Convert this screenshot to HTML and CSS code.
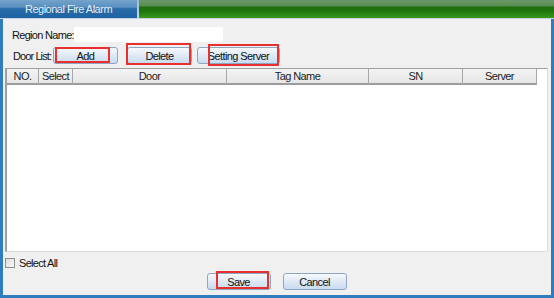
FILE: index.html
```html
<!DOCTYPE html>
<html lang="en">
<head>
  <meta charset="UTF-8" />
  <title>Regional Fire Alarm</title>
  <link rel="stylesheet" href="styles.css">
</head>
<body>
  <div class="window">
    <div class="titlebar">
      <div class="tab">Regional Fire Alarm</div>
      <div class="tab-gap"></div>
      <div class="tab-rest"></div>
    </div>

    <div class="panel">
      <div class="row region-row">
        <label class="field-label region-label">Region Name:</label>
        <input class="region-input" type="text" />
      </div>

      <div class="row door-row">
        <span class="field-label door-label">Door List:</span>
        <span class="btn-wrap btn-add">
          <button class="btn">Add</button>
          <span class="mark mark-add"></span>
        </span>
        <span class="btn-wrap btn-delete">
          <button class="btn">Delete</button>
          <span class="mark mark-delete"></span>
        </span>
        <span class="btn-wrap btn-server">
          <button class="btn">Setting Server</button>
          <span class="mark mark-server"></span>
        </span>
      </div>

      <div class="table">
        <div class="thead">
          <div class="th">NO.</div>
          <div class="th">Select</div>
          <div class="th">Door</div>
          <div class="th">Tag Name</div>
          <div class="th">SN</div>
          <div class="th">Server</div>
          <div class="th-fill"></div>
        </div>
        <div class="tbody"></div>
      </div>

      <div class="row select-row">
        <span class="checkbox"></span>
        <span class="select-label">Select All</span>
      </div>

      <div class="row footer-row">
        <span class="btn-wrap btn-save">
          <button class="btn">Save</button>
          <span class="mark mark-save"></span>
        </span>
        <span class="btn-wrap btn-cancel">
          <button class="btn">Cancel</button>
        </span>
      </div>
    </div>
  </div>
</body>
</html>
```

FILE: styles.css
```css
* {
  margin: 0; padding: 0; box-sizing: border-box;
  font-family: "Liberation Sans", Arial, sans-serif;
}

body {
  width: 554px;
  height: 298px;
  background: #f0f0f0;
  overflow: hidden;
}

.window {
  width: 554px;
  height: 298px;
  display: flex;
  flex-direction: column;
}

/* title strip */
.titlebar {
  display: flex;
  height: 19px;
  border-bottom: 1px solid #c4d6e6;
  flex-shrink: 0;
}

.tab {
  width: 137px;
  background: linear-gradient(#74a3cb 0%, #5a90c0 40%, #2a6daa 48%, #1d62a3 100%);
  color: #e4edf5;
  font-size: 11px;
  letter-spacing: -0.5px;
  line-height: 18px;
  text-align: center;
}

.tab-gap {
  width: 2px;
  background: linear-gradient(#9cbad6, #c6d9ea);
}

.tab-rest {
  flex: 1;
  background: linear-gradient(#6b9a68 0%, #5a8f55 30%, #1d6c0c 42%, #1f780d 65%, #3a9a1c 100%);
}

/* body of the dialog */
.panel {
  flex: 1;
  display: flex;
  flex-direction: column;
  padding: 0 3px 5px 2px;
  border-left: 3px solid #2f7cbf;
  border-right: 3px solid #2f7cbf;
  border-bottom: 3px solid #2f7cbf;
  background: #f0f0f0;
}

.row {
  display: flex;
  align-items: center;
}

.field-label {
  font-size: 11px;
  letter-spacing: -0.6px;
  color: #111;
  white-space: nowrap;
  flex-shrink: 0;
}

.region-row {
  margin-top: 8px;
  height: 15px;
  padding-left: 7px;
}

.region-label {
  width: 62px;
  letter-spacing: -0.7px;
}

.region-input {
  width: 149px;
  height: 15px;
  border: none;
  background: #fff;
  outline: none;
}

.door-row {
  margin-top: 5px;
  height: 17px;
  padding-left: 8px;
}

.door-label {
  width: 40px;
  letter-spacing: -0.9px;
}

.btn-wrap {
  position: relative;
  display: inline-flex;
}

.btn {
  height: 17px;
  border: 1px solid #8fa6c2;
  border-radius: 3px;
  background: linear-gradient(#f6f9fd 0%, #dfe9f5 50%, #c9dbef 100%);
  font-size: 11px;
  letter-spacing: -0.6px;
  color: #111;
  white-space: nowrap;
  cursor: pointer;
}

.btn-add .btn { width: 65px; }
.btn-delete { margin-left: 9px; }
.btn-delete .btn { width: 65px; }
.btn-server { margin-left: 5px; }
.btn-server .btn { width: 83px; }

/* red annotation frames */
.mark {
  position: absolute;
  border: 2px solid #e8302e;
  pointer-events: none;
}

.mark-add { left: 2px; top: 0; width: 55px; height: 16px; }
.mark-delete { left: -1px; top: -4px; width: 65px; height: 22px; }
.mark-server { left: 11px; top: -3px; width: 71px; height: 22px; }
.mark-save { left: 9px; top: -2px; width: 53px; height: 18px; }

/* table */
.table {
  margin-top: 4px;
  height: 184px;
  display: flex;
  flex-direction: column;
  background: #fff;
  border-top: 1px solid #a0a0a0;
  border-left: 2px solid #a0a0a0;
  border-right: 1px solid #dcdcdc;
  border-bottom: 1px solid #dcdcdc;
}

.thead {
  display: grid;
  grid-template-columns: 32px 34px 154px 142px 94px 74px 1fr;
  height: 16px;
  flex-shrink: 0;
}

.th {
  background: linear-gradient(#f4f4f4, #e6e6e6);
  border-right: 1px solid #a8a8a8;
  border-bottom: 2px solid #9c9c9c;
  font-size: 11px;
  letter-spacing: -0.6px;
  color: #222;
  text-align: center;
  line-height: 14px;
}

.th-fill {
  background: #fff;
}

.tbody {
  flex: 1;
}

/* select all */
.select-row {
  margin-top: 6px;
  height: 10px;
}

.checkbox {
  width: 10px;
  height: 10px;
  border: 1px solid #8e8f8f;
  background: linear-gradient(135deg, #dcdcdc, #f8f8f8);
}

.select-label {
  margin-left: 4px;
  font-size: 11px;
  letter-spacing: -0.7px;
  color: #111;
}

/* footer buttons */
.footer-row {
  margin-top: 5px;
  height: 17px;
  justify-content: center;
  gap: 12px;
}

.footer-row .btn { width: 64px; }
```
